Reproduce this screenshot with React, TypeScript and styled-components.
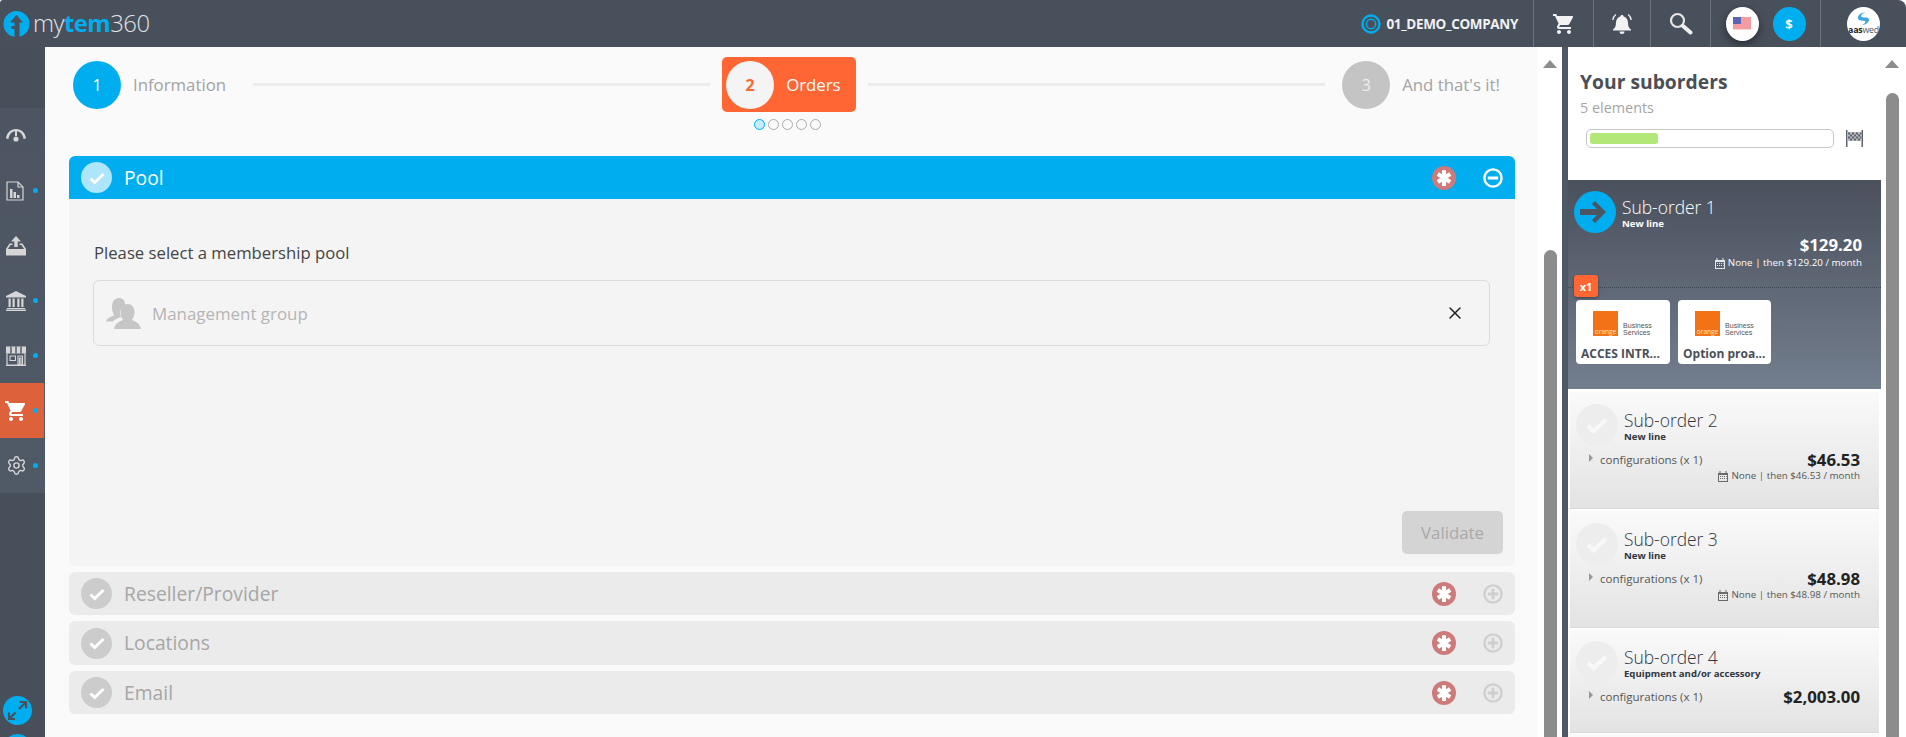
import React from "react";
import styled, { createGlobalStyle } from "styled-components";
import { MdShoppingCart } from "react-icons/md";
import { Settings, X } from "lucide-react";

const Global = createGlobalStyle`
  html, body { margin: 0; padding: 0; height: 737px; overflow: hidden; background: #fff; }
  * { box-sizing: border-box; }
  body { font-family: "Open Sans", "Liberation Sans", sans-serif; }
`;

const Page = styled.div`display: flex; flex-direction: column; width: 1906px; height: 737px; overflow: hidden; background: #fff;`;
const Header = styled.header`display: flex; align-items: stretch; height: 47px; flex: none; background: #48505b; border-top-right-radius: 8px; border-top-left-radius: 3px;`;
const Logo = styled.div`display: flex; align-items: center; padding-left: 3px; gap: 3px;`;
const LogoText = styled.div`font-size: 23.8px; font-weight: 300; color: #e2e4e6; letter-spacing: -0.5px; line-height: 47px;`;
const LogoBold = styled.span`font-weight: 700; color: #00aeef;`;
const HeaderRight = styled.div`margin-left: auto; display: flex; align-items: stretch;`;
const Company = styled.div`display: flex; align-items: center; gap: 5px; padding-right: 15px; font-size: 13.5px; font-weight: 700; color: #f0f1f2; letter-spacing: -0.35px;`;
const HeadCell = styled.div<{ $w: number; $gap?: number }>`
  width: ${(p) => p.$w}px; display: flex; align-items: center; justify-content: center; gap: ${(p) => p.$gap ?? 0}px;
  border-left: 1px solid #6d747e; color: #f2f2f2;
`;
const RoundBtn = styled.div<{ $bg: string; $shadow?: boolean }>`
  width: 33px; height: 34px; border-radius: 50%; background: ${(p) => p.$bg}; display: flex; align-items: center; justify-content: center;
  color: #fff; font-size: 13px; font-weight: 700; overflow: hidden; flex: none;
  ${(p) => (p.$shadow ? "box-shadow: 0 3px 8px rgba(0,0,0,.45);" : "")}
`;
const SaasLabel = styled.div`display: flex; flex-direction: column; align-items: center; font-size: 8.8px; line-height: 9px; color: #555; letter-spacing: -.2px; white-space: nowrap; font-weight: 400;`;
const SaasStrong = styled.b`color: #222;`;

const Content = styled.div`flex: 1; display: flex; min-height: 0;`;
const Sidebar = styled.nav`position: relative; width: 45px; flex: none; background: #47505a; padding-top: 61px;`;
const NavItem = styled.div<{ $active?: boolean }>`
  position: relative; width: 44px; height: 55px; display: flex; align-items: center; padding-left: 6px; color: #d6d6d6;
  background: ${(p) => (p.$active ? "#dd623c" : "transparent")};
  ${(p) => (p.$active ? "color: #fff;" : "")}
`;
const NavList = styled.div`width: 45px; background: linear-gradient(#4c5561, #505a66);`;
const NavDot = styled.i`position: absolute; left: 33px; top: 25px; width: 5px; height: 5px; border-radius: 50%; background: #00aeef;`;
const Floating = styled.div<{ $top: number }>`
  position: absolute; left: 3px; top: ${(p) => p.$top}px; width: 29px; height: 29px; border-radius: 50%; background: #00aeef;
  display: flex; align-items: center; justify-content: center; color: #48505b;
`;

const Main = styled.main`width: 1493px; flex: none; background: #fafafa; padding: 10px 23px 0 24px; overflow: hidden;`;
const Stepper = styled.div`display: flex; align-items: flex-start; height: 73px; padding: 0 15px 0 4px; margin-bottom: 26px; color: #a3a3a3; font-size: 16.8px;`;
const Step = styled.div`display: flex; align-items: center; gap: 12px; height: 55px; flex: none;`;
const StepCircle = styled.div<{ $bg: string; $fg: string; $bold?: boolean }>`
  width: 48px; height: 48px; border-radius: 50%; background: ${(p) => p.$bg}; color: ${(p) => p.$fg};
  display: flex; align-items: center; justify-content: center; font-size: 16px; font-weight: ${(p) => (p.$bold ? 700 : 400)};
`;
const StepLine = styled.div<{ $ml: number; $mr: number }>`flex: 1; height: 3px; background: #ececec; margin: 26px ${(p) => p.$mr}px 0 ${(p) => p.$ml}px;`;
const MiddleStep = styled.div`display: flex; flex-direction: column; align-items: center; flex: none; width: 134px;`;
const Pill = styled.div`width: 134px; height: 55px; padding-left: 4px; border-radius: 5px; background: #ff6633; color: #fff; display: flex; align-items: center; gap: 12px;`;
const Dots = styled.div`display: flex; gap: 3px; margin-top: 7px; margin-left: -3px;`;
const Dot = styled.i<{ $on?: boolean }>`
  width: 11px; height: 11px; border-radius: 50%; border: 1px solid ${(p) => (p.$on ? "#00aeef" : "#aaa")}; background: ${(p) => (p.$on ? "#c5ecfa" : "transparent")};
`;
const Accordion = styled.div`display: flex; flex-direction: column; gap: 6px; width: 1446px;`;
const Section = styled.section`display: flex; flex-direction: column;`;
const SectionHead = styled.div<{ $active?: boolean; $h: number }>`
  height: ${(p) => p.$h}px; display: flex; align-items: center; padding: 0 12px;
  background: ${(p) => (p.$active ? "#00aeef" : "#ebebeb")}; color: ${(p) => (p.$active ? "#fff" : "#a6a6a6")};
  border-radius: ${(p) => (p.$active ? "6px 6px 0 0" : "6px")};
`;
const CheckDisc = styled.div<{ $bg: string; $size: number }>`
  width: ${(p) => p.$size}px; height: ${(p) => p.$size}px; border-radius: 50%; background: ${(p) => p.$bg}; flex: none;
  display: flex; align-items: center; justify-content: center; color: #fff;
`;
const SectionTitle = styled.div`font-size: 19.3px; margin-left: 12px; line-height: 24px;`;
const Required = styled.div`
  width: 24px; height: 24px; border-radius: 50%; background: #cd7a7a; margin-left: auto; margin-right: 27px;
  display: flex; align-items: center; justify-content: center; color: #fff;
`;
const PlusSlot = styled.span`color: #cfcfcf; display: flex;`;
const SectionBody = styled.div`height: 367px; background: #f4f4f4; border-radius: 0 0 6px 6px; padding: 44px 12px 12px 24px; display: flex; flex-direction: column;`;
const Label = styled.div`font-size: 16.7px; line-height: 20px; color: #444; font-weight: 400; padding-left: 1px;`;
const PickerRow = styled.div`
  height: 66px; width: 1397px; margin-top: 17px; border: 1px solid #dcdcdc; border-radius: 6px; display: flex; align-items: center; padding: 0 24px 0 12px; color: #b4b4b4; font-size: 16.9px;
`;
const PickerText = styled.span`margin-left: 11px; flex: 1;`;
const Validate = styled.button`
  margin-top: auto; align-self: flex-end; width: 101px; height: 43px; border: 0; border-radius: 5px; background: #d4d4d4; color: #a9a9a9;
  font-family: inherit; font-size: 16.8px;
`;

const Gutter = styled.div<{ $pad: number; $thumbTop: number }>`
  width: ${(p) => p.$pad}px; flex: none; background: #fff; padding-left: ${(p) => (p.$pad === 24 ? 6 : 5)}px; display: flex; flex-direction: column;
  --thumb: ${(p) => p.$thumbTop}px;
`;
const ScrollArrow = styled.div`width: 0; height: 0; margin: 13px 0 0 -1px; border-left: 7.5px solid transparent; border-right: 7.5px solid transparent; border-bottom: 8px solid #8c8c8c;`;
const ScrollThumb = styled.div`width: 13px; flex: 1; margin-top: var(--thumb); background: #8c8c8c; border-radius: 7px 7px 0 0;`;
const Strip = styled.div`width: 6px; flex: none; background: #4f5966;`;

const Panel = styled.aside`width: 313px; flex: none; display: flex; flex-direction: column; background: #fff; overflow: hidden;`;
const PanelHead = styled.div`height: 133px; flex: none; padding: 22px 12px 0; background: #fff;`;
const PanelTitle = styled.div`font-size: 19.3px; font-weight: 700; line-height: 26px; color: #4a4f57; `;
const PanelCount = styled.div`font-size: 14.4px; line-height: 20px; margin-top: 3px; color: #a5a5a5;`;
const ProgressRow = styled.div`display: flex; align-items: center; gap: 12px; margin-top: 11px; padding-left: 6px;`;
const ProgressTrack = styled.div`width: 248px; height: 19px; border: 1px solid #c8c8c8; border-radius: 5px; padding: 3px;`;
const ProgressFill = styled.div`width: 68px; height: 11px; border-radius: 3px; background: #b3e878;`;

const ActiveOrder = styled.div`height: 209px; flex: none; padding-top: 11px; background: linear-gradient(#4a505c, #737e8e); color: #fff;`;
const OrderTop = styled.div<{ $left: number }>`display: flex; gap: 6px; padding-left: ${(p) => p.$left}px;`;
const OrderDisc = styled.div<{ $bg: string; $fg?: string }>`
  width: 42px; height: 42px; border-radius: 50%; background: ${(p) => p.$bg}; display: flex; align-items: center; justify-content: center; flex: none; color: ${(p) => p.$fg ?? "#fff"};
`;
const OrderNames = styled.div`padding-top: 5px;`;
const OrderName = styled.div`font-size: 17.4px; font-weight: 300; line-height: 22px;`;
const OrderType = styled.div`font-size: 9.6px; line-height: 12px; font-weight: 700; white-space: nowrap;`;
const PriceLine = styled.div<{ $size: number; $lh: number; $right: number; $bold?: boolean; $mt?: number }>`
  display: flex; justify-content: flex-end; align-items: center; gap: 3px; padding-right: ${(p) => p.$right}px; line-height: ${(p) => p.$lh}px;
  margin-top: ${(p) => p.$mt ?? 0}px;
  font-size: ${(p) => p.$size}px; font-weight: ${(p) => (p.$bold ? 700 : 400)}; white-space: nowrap;
`;
const ProductArea = styled.div`position: relative; margin-top: 17px; border-top: 1px dotted #3f4650; padding: 12px 0 0 8px; display: flex; gap: 8px;`;
const Qty = styled.div`position: absolute; left: 6px; top: -13px; width: 24px; height: 22px; border-radius: 3px; background: #ff6633; color: #fff; font-size: 11px; font-weight: 700; display: flex; align-items: center; justify-content: center; box-shadow: 0 1px 3px rgba(0,0,0,.4);`;
const ProductCard = styled.div<{ $w: number }>`width: ${(p) => p.$w}px; height: 64px; background: #fff; border-radius: 4px; padding: 11px 0 0 5px; overflow: hidden; color: #4a4f57;`;
const Brand = styled.div`display: flex; align-items: flex-end; gap: 5px; height: 25px; padding-left: 12px;`;
const OrangeSquare = styled.div`width: 25px; height: 25px; background: #f47216; color: #ffe6d2; font-size: 6.5px; line-height: 8px; display: flex; align-items: flex-end; justify-content: center; flex: none;`;
const BrandText = styled.div`font-family: "Liberation Sans", sans-serif; font-size: 7.1px; line-height: 7px; color: #555; margin-bottom: -1px;`;
const ProductName = styled.div`font-size: 12px; font-weight: 700; line-height: 16px; margin-top: 10px; white-space: nowrap;`;

const Order = styled.div<{ $h: number; $mt: number }>`
  height: ${(p) => p.$h}px; margin: ${(p) => p.$mt}px 2px 0; flex: none; padding-top: 12px; background: linear-gradient(#fafafa, #e3e3e3); color: #2f3640; box-shadow: 0 1px 0 #d8d8d8;
`;
const ConfigRow = styled.div`display: flex; align-items: center; justify-content: space-between; height: 18px; margin-top: 4px; padding: 0 19px; color: #222;`;
const ConfigLabel = styled.div`display: flex; align-items: center; gap: 7px; font-size: 11.5px; color: #555;`;
const Caret = styled.i`width: 0; height: 0; border-left: 4px solid #999; border-top: 4.5px solid transparent; border-bottom: 4.5px solid transparent; margin-top: -2px;`;
const OrderPrice = styled.div`font-size: 16.8px; font-weight: 700;`;
const Muted = styled.div`color: #555;`;

const Check = ({ s = 20 }: { s?: number }) => (
  <svg width={s} height={s} viewBox="0 0 20 20" fill="none"><path d="M3.5 10.5l4.2 4L16.5 6" stroke="currentColor" strokeWidth="3" /></svg>
);
const Asterisk = () => (
  <svg width="18" height="18" viewBox="0 0 16 16" stroke="#fff" strokeWidth="3.6"><path d="M8 1v14M2.500 4.500l11 7M13.500 4.500l-11 7" /></svg>
);
const Toggle = ({ plus }: { plus?: boolean }) => (
  <svg width="20" height="20" viewBox="0 0 20 20" fill="none" stroke="currentColor" strokeWidth="2.4">
    <circle cx="10" cy="10" r="8.6" />
    <path d={plus ? "M4.8 10h10.4M10 4.8v10.4" : "M4.8 10h10.4"} strokeWidth="3" />
  </svg>
);
const Calendar = () => (
  <svg width="10" height="11" viewBox="0 0 10 11" fill="currentColor" opacity=".85">
    <path d="M0 2h1.500V0h1v2h5V0h1v2H10v9H0zM1 4v6h8V4z" />
    <path d="M2 5h1v1H2zM4 5h1v1H4zM6 5h1v1H6zM8 5h.6v1H8zM2 7h1v1H2zM4 7h1v1H4zM6 7h1v1H6zM8 7h.6v1H8z" />
  </svg>
);
const Gauge = () => (
  <svg width="20" height="20" viewBox="0 0 20 20" fill="currentColor">
    <path d="M0 12.500C.6 6.800 4.800 3 10 3s9.400 3.800 10 9.500l-2.400.5C17 8.500 14 5.400 11 5.200L11 10H9V5.200C6 5.400 3 8.500 2.400 13z" />
    <circle cx="10" cy="13" r="2.600" />
  </svg>
);
const Report = () => (
  <svg width="18" height="20" viewBox="0 0 18 20" fill="none" stroke="currentColor">
    <path d="M1 1h11l5 5v13H1z" strokeWidth="1.200" /><path d="M12 1v5h5" strokeWidth="1.200" />
    <path d="M4 8h2.500v9H4zM7.500 11H10v6H7.500zM11 14h2.500v3H11z" fill="currentColor" stroke="none" />
  </svg>
);
const Inbox = () => (
  <svg width="20" height="20" viewBox="0 0 20 20" fill="currentColor">
    <path d="M10 0l5 5.500h-3.300V11H8.300V5.500H5z" />
    <path d="M3.500 7.500H6.500v1.400H4.500L2 13h16l-2.500-4.100h-2V7.500h3L20 13v6.500H0V13z" />
  </svg>
);
const Bank = () => (
  <svg width="20" height="20" viewBox="0 0 20 20" fill="currentColor">
    <path d="M10 0l10 5v1.500H0V5zM1 17h18v1H1zM0 18.500h20V20H0z" />
    <path d="M2.500 7.500h2.200V16H2.500zM6.500 7.500h2.200V16H6.500zM11.300 7.500h2.200V16h-2.200zM15.300 7.500h2.200V16h-2.200z" />
  </svg>
);
const Store = () => (
  <svg width="20" height="20" viewBox="0 0 20 20" fill="none" stroke="currentColor">
    <path d="M0 .5h20v7H0z" fill="currentColor" stroke="none" />
    <path d="M5 .5v7M10 .5v7M15 .5v7" stroke="#4f5864" strokeWidth="1.400" />
    <path d="M1 7.500V19h18V7.500M0 19.500h20" strokeWidth="1.200" />
    <path d="M4 10h5.500v4.500H4zM12 10h4.500v9H15v-7h-1.500v7H12z" strokeWidth="1.100" />
  </svg>
);
const Bell = () => (
  <svg width="22" height="22" viewBox="0 0 22 22" fill="currentColor">
    <path d="M11 2c1 0 1.600.6 1.600 1.400C15.300 4.100 17 6.400 17 9.500c0 3.600.8 5.400 3 7v1H2v-1c2.200-1.600 3-3.400 3-7 0-3.100 1.700-5.400 4.400-6.100C9.400 2.600 10 2 11 2zM8.500 18.500h5a2.500 2.500 0 0 1-5 0z" />
    <path d="M4.800 1.500C3 3 2 5 1.800 7M17.200 1.500C19 3 20 5 20.200 7" fill="none" stroke="currentColor" strokeWidth="1.300" />
  </svg>
);
const Search = () => (
  <svg width="24" height="24" viewBox="0 0 24 24" fill="none">
    <circle cx="8.500" cy="8.500" r="6.500" stroke="#e6e6e6" strokeWidth="2.200" />
    <path d="M14 14l7.500 6.500" stroke="#f0f0f0" strokeWidth="4" strokeLinecap="round" />
  </svg>
);
const Finish = () => (
  <svg width="17" height="17" viewBox="0 0 17 17">
    <path d="M0 0h1.500v17H0zM15.500 0H17v17h-1.500z" fill="#5a6470" />
    <path d="M1.500 2h14v9h-14z" fill="#bbb" />
    <path d="M2 2.500h2v2H2zM6 2.500h2v2H6zM10 2.500h2v2h-2zM14 2.500h1.500v2H14zM4 4.500h2v2H4zM8 4.500h2v2H8zM12 4.500h2v2h-2zM2 6.500h2v2H2zM6 6.500h2v2H6zM10 6.500h2v2h-2zM14 6.500h1.500v2H14zM4 8.500h2v2H4zM8 8.500h2v2H8zM12 8.500h2v2h-2z" fill="#5a6470" />
  </svg>
);
const People = () => (
  <svg width="35" height="31" viewBox="0 0 35 31" fill="#c6c6c6">
    <path d="M13 0c3.500 0 6 2.500 6 6 0 1 -.2 1.800-.5 2.500C15.500 9 13.500 12 14 16c.2 1.200.6 2 1 3-3 1-6.500 2.500-8 4.500H0c.5-2.500 3-4.500 8-6-1-2-2-5-2-9 0-5 3-8.500 7-8.500z" />
    <path d="M21.500 6c4.300 0 7 3.200 7 8 0 3.400-1.200 6-2.700 8 4 1.400 8.200 3.300 9.200 9H8c1-5.700 5.200-7.600 9.200-9-1.500-2-2.700-4.600-2.700-8 0-4.800 2.700-8 7-8z" />
  </svg>
);
const ArrowRight = () => (
  <svg width="30" height="24" viewBox="0 0 30 24" fill="#4c5562"><path d="M0 9h17l-5-5 3-3 11 11-11 11-3-3 5-5H0z" /></svg>
);
const Expand = () => (
  <svg width="21" height="21" viewBox="0 0 21 21" fill="none" stroke="currentColor" strokeWidth="2.200">
    <path d="M12 9l6.500-6.500M12.500 2h6.500v6.500M8.500 12.500L2.500 18.500M8 19H2v-6.500" />
  </svg>
);
const LogoMark = () => (
  <svg width="27" height="26" viewBox="0 0 27 26">
    <circle cx="13.500" cy="13" r="13" fill="#00aeef" />
    <path d="M13.500 4l6.500 7.500h-3.500v14.500h-5V18H8.500v-3h3v-3.500H7z" fill="#48505b" />
  </svg>
);
const Target = () => (
  <svg width="20" height="20" viewBox="0 0 20 20" fill="none" stroke="#00aeef"><circle cx="10" cy="10" r="8.500" strokeWidth="2.400" /><circle cx="10" cy="10" r="4.700" strokeWidth="1.500" /></svg>
);
const Flag = () => (
  <svg width="18" height="13" viewBox="0 0 18 13">
    <rect width="18" height="13" fill="#f9d5d5" />
    <path d="M0 1h18M0 3h18M0 5h18M0 7h18M0 9h18M0 11h18" stroke="#f0626b" strokeWidth="1" />
    <rect width="8" height="7" fill="#5b64b5" />
  </svg>
);
const Swirl = () => (
  <svg width="17" height="14" viewBox="0 0 17 14"><path d="M3 6C3 2 7 0 11 1c-3 0-5 1-5 3 0 2 5 1 7 2 3 2-1 7-6 7 3-1 4-3 3-4C9 8 3 10 3 6z" fill="#3fa6dd" /></svg>
);

const orderData = [
  { name: "Sub-order 2", type: "New line", price: "$46.53", per: "None | then $46.53 / month", h: 116, mt: 3 },
  { name: "Sub-order 3", type: "New line", price: "$48.98", per: "None | then $48.98 / month", h: 116, mt: 3 },
  { name: "Sub-order 4", type: "Equipment and/or accessory", price: "$2,003.00", per: "", h: 103, mt: 2 },
];

const navIcons = [
  { icon: <Gauge />, dot: false },
  { icon: <Report />, dot: true },
  { icon: <Inbox />, dot: false },
  { icon: <Bank />, dot: true },
  { icon: <Store />, dot: true },
  { icon: <MdShoppingCart size={24} style={{ marginLeft: -2 }} />, dot: true, active: true },
  { icon: <Settings size={21} strokeWidth={1.6} />, dot: true },
];

const Product = ({ name, w }: { name: string; w: number }) => (
  <ProductCard $w={w}>
    <Brand>
      <OrangeSquare>orange</OrangeSquare>
      <BrandText>Business<br />Services</BrandText>
    </Brand>
    <ProductName>{name}</ProductName>
  </ProductCard>
);

export default function App() {
  return (
    <Page>
      <Global />
      <Header>
        <Logo>
          <LogoMark />
          <LogoText>my<LogoBold>tem</LogoBold>360</LogoText>
        </Logo>
        <HeaderRight>
          <Company><Target />01_DEMO_COMPANY</Company>
          <HeadCell $w={60}><MdShoppingCart size={24} /></HeadCell>
          <HeadCell $w={57}><Bell /></HeadCell>
          <HeadCell $w={60}><Search /></HeadCell>
          <HeadCell $w={110} $gap={14}>
            <RoundBtn $bg="#fff" $shadow><Flag /></RoundBtn>
            <RoundBtn $bg="#00aeef">$</RoundBtn>
          </HeadCell>
          <HeadCell $w={86}>
            <RoundBtn $bg="#fff">
              <SaasLabel><Swirl /><span><SaasStrong>aas</SaasStrong>wed</span></SaasLabel>
            </RoundBtn>
          </HeadCell>
        </HeaderRight>
      </Header>
      <Content>
        <Sidebar>
          <NavList>
            {navIcons.map((n, i) => (
              <NavItem key={i} $active={n.active}>
                {n.icon}
                {n.dot && <NavDot />}
              </NavItem>
            ))}
          </NavList>
          <Floating $top={649}><Expand /></Floating>
          <Floating $top={687} />
        </Sidebar>
        <Main>
          <Stepper>
            <Step>
              <StepCircle $bg="#00aeef" $fg="#fff">1</StepCircle>
              Information
            </Step>
            <StepLine $ml={27} $mr={12} />
            <MiddleStep>
              <Pill>
                <StepCircle $bg="#f4f4f4" $fg="#ff6633" $bold>2</StepCircle>
                Orders
              </Pill>
              <Dots>
                <Dot $on /><Dot /><Dot /><Dot /><Dot />
              </Dots>
            </MiddleStep>
            <StepLine $ml={12} $mr={17} />
            <Step>
              <StepCircle $bg="#c4c4c4" $fg="#eee">3</StepCircle>
              And that's it!
            </Step>
          </Stepper>
          <Accordion>
            <Section>
              <SectionHead $active $h={43}>
                <CheckDisc $bg="rgba(255,255,255,.68)" $size={31}><Check /></CheckDisc>
                <SectionTitle>Pool</SectionTitle>
                <Required><Asterisk /></Required>
                <Toggle />
              </SectionHead>
              <SectionBody>
                <Label>Please select a membership pool</Label>
                <PickerRow>
                  <People />
                  <PickerText>Management group</PickerText>
                  <X size={20} color="#222" strokeWidth={1.8} />
                </PickerRow>
                <Validate>Validate</Validate>
              </SectionBody>
            </Section>
            {([["Reseller/Provider", 43], ["Locations", 44], ["Email", 43]] as [string, number][]).map(([t, h]) => (
              <SectionHead key={t} $h={h}>
                <CheckDisc $bg="#cccccc" $size={31}><Check /></CheckDisc>
                <SectionTitle>{t}</SectionTitle>
                <Required><Asterisk /></Required>
                <PlusSlot><Toggle plus /></PlusSlot>
              </SectionHead>
            ))}
          </Accordion>
        </Main>
        <Gutter $pad={24} $thumbTop={182}>
          <ScrollArrow />
          <ScrollThumb />
        </Gutter>
        <Strip />
        <Panel>
          <PanelHead>
            <PanelTitle>Your suborders</PanelTitle>
            <PanelCount>5 elements</PanelCount>
            <ProgressRow>
              <ProgressTrack><ProgressFill /></ProgressTrack>
              <Finish />
            </ProgressRow>
          </PanelHead>
          <ActiveOrder>
            <OrderTop $left={6}>
              <OrderDisc $bg="#00aeef"><ArrowRight /></OrderDisc>
              <OrderNames>
                <OrderName>Sub-order 1</OrderName>
                <OrderType>New line</OrderType>
              </OrderNames>
            </OrderTop>
            <PriceLine $size={16.8} $lh={22} $right={19} $bold $mt={1}>$129.20</PriceLine>
            <PriceLine $size={9.8} $lh={14} $right={19}><Calendar />None | then $129.20 / month</PriceLine>
            <ProductArea>
              <Qty>x1</Qty>
              <Product name="ACCES INTR..." w={94} />
              <Product name="Option proa..." w={93} />
            </ProductArea>
          </ActiveOrder>
          {orderData.map((o) => (
            <Order key={o.name} $h={o.h} $mt={o.mt}>
              <OrderTop $left={6}>
                <OrderDisc $bg="#ededed" $fg="#f8f8f8"><Check s={28} /></OrderDisc>
                <OrderNames>
                  <OrderName>{o.name}</OrderName>
                  <OrderType>{o.type}</OrderType>
                </OrderNames>
              </OrderTop>
              <ConfigRow>
                <ConfigLabel><Caret />configurations (x 1)</ConfigLabel>
                <OrderPrice>{o.price}</OrderPrice>
              </ConfigRow>
              {o.per && (
                <Muted>
                  <PriceLine $size={9.8} $lh={16} $right={19}><Calendar />{o.per}</PriceLine>
                </Muted>
              )}
            </Order>
          ))}
          <Order $h={103} $mt={2} />
        </Panel>
        <Gutter $pad={25} $thumbTop={25}>
          <ScrollArrow />
          <ScrollThumb />
        </Gutter>
      </Content>
    </Page>
  );
}
